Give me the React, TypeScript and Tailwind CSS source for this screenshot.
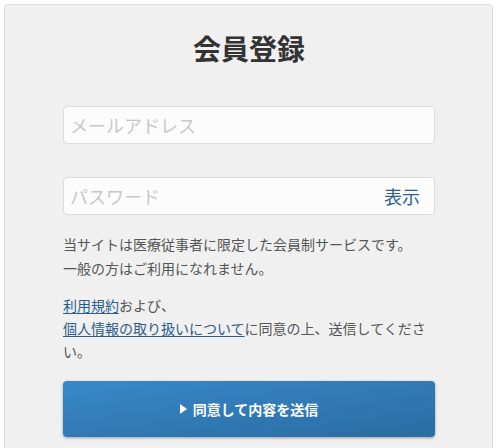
export default function App() {
  return (
    <div
      className="w-[500px] h-[448px] bg-white overflow-hidden pt-[4px] pl-[4px]"
      style={{ fontFamily: '"Noto Sans CJK JP", "Noto Sans", sans-serif' }}
    >
      <div className="w-[489px] h-[460px] bg-[#f0f0f0] border border-[#dedede] rounded-[4px] pl-[58px] pr-[57px] pt-[24px]">
        <h1 className="text-center text-[28px] leading-[38px] font-bold text-[#333]">会員登録</h1>

        <div className="mt-[39px] h-[38px] bg-[#fcfcfc] border border-[#dcdcdc] rounded-[4px] flex items-center px-[6px]">
          <span className="text-[18px] text-[#c8c8c8]">メールアドレス</span>
        </div>

        <div className="mt-[33px] h-[38px] bg-[#fcfcfc] border border-[#dcdcdc] rounded-[4px] flex items-center justify-between pl-[6px] pr-[14px]">
          <span className="text-[18px] text-[#c8c8c8]">パスワード</span>
          <span className="text-[18px] text-[#2d5f8e]">表示</span>
        </div>

        <p className="mt-[17px] text-[14px] leading-[24px] text-[#555]">
          当サイトは医療従事者に限定した会員制サービスです。
          <br />
          一般の方はご利用になれません。
        </p>

        <p className="mt-[14px] text-[14px] leading-[23px] text-[#555]">
          <a className="text-[#2a5d8c] underline underline-offset-2">利用規約</a>および、
          <br />
          <a className="text-[#2a5d8c] underline underline-offset-2">個人情報の取り扱いについて</a>
          に同意の上、送信してください。
        </p>

        <button className="mt-[18px] w-full h-[56px] rounded-[4px] bg-gradient-to-br from-[#3889c9] to-[#2a6ca3] shadow-[0_1px_3px_rgba(0,0,0,0.35)] flex items-center justify-center gap-[6px] text-white text-[14px] font-bold">
          <svg width="7" height="10" viewBox="0 0 7 10">
            <path d="M0 0 L7 5 L0 10 Z" fill="white" />
          </svg>
          同意して内容を送信
        </button>
      </div>
    </div>
  );
}
